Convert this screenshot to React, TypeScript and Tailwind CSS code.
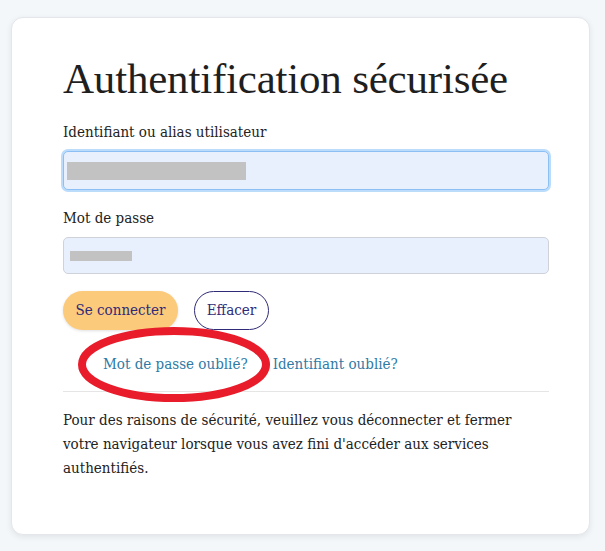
import React from "react";

export default function App() {
  const serif = { fontFamily: '"DejaVu Serif Condensed", "Liberation Serif", serif' };
  const title = { fontFamily: '"Liberation Serif", serif' };
  return (
    <div className="min-h-[551px] w-[605px] bg-[#f3f7fa] pt-[17px] pl-[11px]" style={serif}>
      <div className="relative w-[579px] h-[518px] bg-white rounded-[12px] border border-[#e3e6ea] shadow-[0_2px_6px_rgba(0,0,0,0.08)] pl-[51px] pr-[40px] pt-[37px]">
        <h1 className="text-[43px] leading-[48px] text-[#1f1f1f] tracking-[-0.2px]" style={title}>Authentification sécurisée</h1>
        <label className="block mt-[19px] text-[15px] leading-[20px] text-[#222]">Identifiant ou alias utilisateur</label>
        <div className="mt-[9px] h-[39px] rounded-[5px] border border-[#8cc0f5] bg-[#e8f0fe] ring-[2px] ring-[#bcdcfb] flex items-center pl-[3px]">
          <div className="w-[179px] h-[18px] bg-[#c2c2c2]" />
        </div>
        <label className="block mt-[18px] text-[15px] leading-[20px] text-[#222]">Mot de passe</label>
        <div className="mt-[9px] h-[37px] rounded-[5px] border border-[#cfd3d9] bg-[#e8f0fe] flex items-center pl-[6px]">
          <div className="w-[62px] h-[10px] bg-[#c2c2c2]" />
        </div>
        <div className="mt-[17px] flex gap-[16px]">
          <button className="h-[39px] w-[115px] rounded-full bg-[#fcca7b] text-[#2f2b78] text-[15px] shadow-[0_1px_3px_rgba(0,0,0,0.12)]">Se connecter</button>
          <button className="h-[39px] w-[75px] rounded-full border border-[#2f2b78] text-[#2f2b78] text-[15px] bg-white">Effacer</button>
        </div>
        <div className="mt-[22px] flex pl-[40px] gap-[25px] text-[15px] leading-[24px] text-[#2f7aa6]">
          <span>Mot de passe oublié?</span>
          <span>Identifiant oublié?</span>
        </div>
        <div className="mt-[15px] border-t border-[#e5e5e5]" />
        <p className="mt-[16px] text-[15px] leading-[24px] text-[#222] w-[470px]">
          Pour des raisons de sécurité, veuillez vous déconnecter et fermer votre navigateur lorsque vous avez fini d'accéder aux services authentifiés.
        </p>
        <svg className="absolute left-[66px] top-[309px]" width="192" height="75" viewBox="0 0 192 75">
          <ellipse cx="96" cy="37.5" rx="92" ry="33.5" fill="none" stroke="#e81c2a" strokeWidth="8" />
        </svg>
      </div>
    </div>
  );
}
